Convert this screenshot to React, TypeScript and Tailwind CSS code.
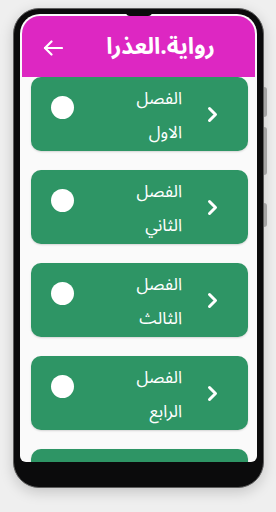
import React from 'react';

const chapters = [
    { first: 'الفصل', second: 'الاول' },
    { first: 'الفصل', second: 'الثاني' },
    { first: 'الفصل', second: 'الثالث' },
    { first: 'الفصل', second: 'الرابع' },
];

function BackArrow() {
    return (
        <svg width="20" height="16" viewBox="0 0 20 16" fill="none" stroke="white" strokeWidth="2.2" strokeLinecap="round" strokeLinejoin="round">
            <path d="M2 8h17" />
            <path d="M8.5 1.5 2 8l6.5 6.5" />
        </svg>
    );
}

function Chevron() {
    return (
        <svg width="13" height="17" viewBox="0 0 13 17" fill="none" stroke="white" strokeWidth="3" strokeLinecap="round" strokeLinejoin="round">
            <path d="M3.5 2.5 9.5 8.5 3.5 14.5" />
        </svg>
    );
}

export default function App() {
    return (
        <div
            className="w-[276px] h-[512px] bg-[#efefef] pt-[8px] pl-[13px] overflow-hidden"
            style={{ fontFamily: '"Noto Sans Arabic", "DejaVu Sans", sans-serif' }}
        >
            {/* Phone frame */}
            <div className="relative w-[251px] h-[480px] rounded-[26px] bg-[#0b0b0c] border border-[#5e5e5e] shadow-[0_4px_14px_rgba(0,0,0,0.18)] pt-[5px] px-[6px] pb-[25px]">
                {/* side buttons */}
                <div className="absolute -right-[4px] top-[78px] w-[3px] h-[30px] rounded-r bg-[#a3a3a3]" />
                <div className="absolute -right-[4px] top-[118px] w-[3px] h-[48px] rounded-r bg-[#a3a3a3]" />
                <div className="absolute -right-[4px] top-[194px] w-[3px] h-[24px] rounded-r bg-[#a3a3a3]" />
                {/* notch */}
                <div className="absolute left-[112px] top-[3px] w-[26px] h-[4px] rounded-b bg-[#0b0b0c] z-10" />

                {/* Screen */}
                <div className="h-full flex flex-col rounded-t-[20px] rounded-b-[6px] overflow-hidden bg-[#fafafa] p-[2px] pb-0">
                    <header className="h-[61px] shrink-0 flex items-center justify-between rounded-t-[18px] bg-[#dd27c2] pl-[21px] pr-[40px] pt-[2px]">
                        <BackArrow />
                        <h1 className="text-white text-[23px] font-bold" dir="rtl">رواية.العذرا</h1>
                    </header>

                    <div className="flex-1 overflow-hidden flex flex-col gap-[19px] pl-[9px] pr-[7px]">
                        {chapters.map((c, i) => (
                            <div key={i} className="h-[74px] shrink-0 rounded-[10px] bg-[#2e9565] shadow-[0_1px_2px_rgba(0,0,0,0.15)] flex items-center pl-[20px] pr-[29px]">
                                <div className="w-[23px] h-[23px] rounded-full bg-white mb-[13px]" />
                                <div className="flex-1 flex flex-col items-end text-white text-[17px] leading-[34px] pt-[3px]">
                                    <span dir="rtl">{c.first}</span>
                                    <span dir="rtl">{c.second}</span>
                                </div>
                                <div className="ml-[24px]">
                                    <Chevron />
                                </div>
                            </div>
                        ))}
                        {/* next card, mostly below the fold */}
                        <div className="h-[74px] shrink-0 rounded-[10px] bg-[#2e9565] shadow-[0_1px_2px_rgba(0,0,0,0.15)]" />
                    </div>
                </div>
            </div>
        </div>
    );
}
